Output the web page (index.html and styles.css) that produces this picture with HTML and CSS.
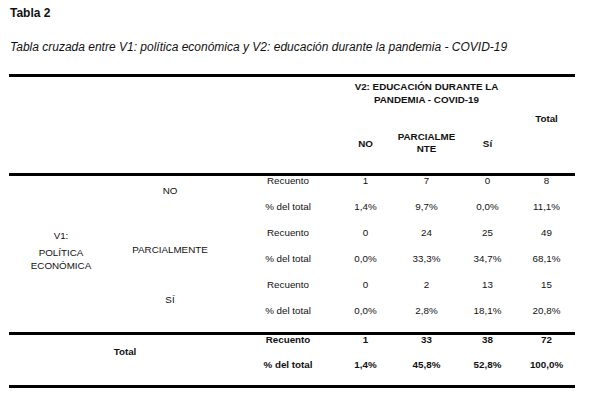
FILE: index.html
```html
<!DOCTYPE html>
<html lang="es">
<head>
<meta charset="utf-8">
<title>Tabla 2</title>
<link rel="stylesheet" href="styles.css">
</head>
<body>
<div class="page">
  <div class="title">Tabla 2</div>
  <div class="caption">Tabla cruzada entre V1: política económica y V2: educación durante la pandemia - COVID-19</div>
  <div class="xtab">
    <div class="rule r1"></div>
    <div class="corner"></div>
    <div class="cell hd v2">V2: EDUCACIÓN DURANTE LA<br>PANDEMIA - COVID-19</div>
    <div class="cell hd htotal">Total</div>
    <div class="cell hd hsub c4">NO</div>
    <div class="cell hd hsub hparc c5">PARCIALME<br>NTE</div>
    <div class="cell hd hsub c6">Sí</div>
    <div class="rule r4"></div>

    <div class="cell v1"><div class="v1a">V1:</div><div>POLÍTICA<br>ECONÓMICA</div></div>
    <div class="cell rlab lno">NO</div>
    <div class="cell rlab lparc">PARCIALMENTE</div>
    <div class="cell rlab lsi">SÍ</div>

    <div class="cell stat b1">Recuento</div><div class="cell b1">1</div><div class="cell b1">7</div><div class="cell b1">0</div><div class="cell b1">8</div>
    <div class="cell stat b2">% del total</div><div class="cell b2">1,4%</div><div class="cell b2">9,7%</div><div class="cell b2">0,0%</div><div class="cell b2">11,1%</div>
    <div class="cell stat b3">Recuento</div><div class="cell b3">0</div><div class="cell b3">24</div><div class="cell b3">25</div><div class="cell b3">49</div>
    <div class="cell stat b4">% del total</div><div class="cell b4">0,0%</div><div class="cell b4">33,3%</div><div class="cell b4">34,7%</div><div class="cell b4">68,1%</div>
    <div class="cell stat b5">Recuento</div><div class="cell b5">0</div><div class="cell b5">2</div><div class="cell b5">13</div><div class="cell b5">15</div>
    <div class="cell stat b6">% del total</div><div class="cell b6">0,0%</div><div class="cell b6">2,8%</div><div class="cell b6">18,1%</div><div class="cell b6">20,8%</div>

    <div class="rule r11"></div>
    <div class="cell bold tlab">Total</div>
    <div class="cell stat bold t1">Recuento</div><div class="cell bold t1">1</div><div class="cell bold t1">33</div><div class="cell bold t1">38</div><div class="cell bold t1">72</div>
    <div class="cell stat bold t2">% del total</div><div class="cell bold t2">1,4%</div><div class="cell bold t2">45,8%</div><div class="cell bold t2">52,8%</div><div class="cell bold t2">100,0%</div>
    <div class="rule r14"></div>
  </div>
</div>
</body>
</html>
```

FILE: styles.css
```css
html, body {
  margin: 0;
  padding: 0;
  background: #ffffff;
}

.page {
  padding: 6px 0 0 9px;
  font-family: "Liberation Sans", Arial, sans-serif;
  color: #111111;
}

.title {
  font-size: 12px;
  line-height: 14px;
  font-weight: bold;
  padding-left: 1px;
}

.caption {
  margin-top: 20px;
  font-size: 12px;
  line-height: 14px;
  font-style: italic;
  padding-left: 1px;
}

.xtab {
  margin-top: 20px;
  width: 566px;
  display: grid;
  grid-template-columns: 104px 128px 94px 61px 61px 61px 57px;
  grid-template-rows: 3px 31px 65px 3px 26px 26px 26px 26px 26px 26px 3px 25px 25px 3px;
  font-size: 9.8px;
  line-height: 10px;
}

.rule {
  grid-column: 1 / -1;
  background: #000000;
}
.r1 { grid-row: 1; }
.r4 { grid-row: 4; }
.r11 { grid-row: 11; }
.r14 { grid-row: 14; }

.cell {
  text-align: center;
  white-space: nowrap;
}

.corner { grid-column: 1 / 4; grid-row: 2 / 4; }

.hd { font-weight: bold; line-height: 13px; }
.v2 { grid-column: 4 / 7; grid-row: 2; padding-top: 3px; }
.htotal { grid-column: 7; grid-row: 2 / 4; padding-top: 35px; }
.hsub { grid-row: 3; padding-top: 30px; line-height: 12px; }
.hparc { padding-top: 23px; }
.c4 { grid-column: 4; }
.c5 { grid-column: 5; }
.c6 { grid-column: 6; }

.v1 {
  grid-column: 1;
  grid-row: 5 / 11;
  padding-top: 53px;
  line-height: 13px;
}
.v1a { margin-bottom: 4px; }

.rlab { grid-column: 2; padding-right: 14px; }
.lno { grid-row: 5 / 7; padding-top: 10px; }
.lparc { grid-row: 7 / 9; padding-top: 17px; }
.lsi { grid-row: 9 / 11; padding-top: 15px; }

.stat { grid-column: 3; }
.b1 { grid-row: 5; }
.b2 { grid-row: 6; }
.b3 { grid-row: 7; }
.b4 { grid-row: 8; }
.b5 { grid-row: 9; }
.b6 { grid-row: 10; }

.bold { font-weight: bold; }
.tlab { grid-column: 1 / 3; grid-row: 12 / 14; padding-top: 12px; }
.t1 { grid-row: 12; }
.t2 { grid-row: 13; }
```
